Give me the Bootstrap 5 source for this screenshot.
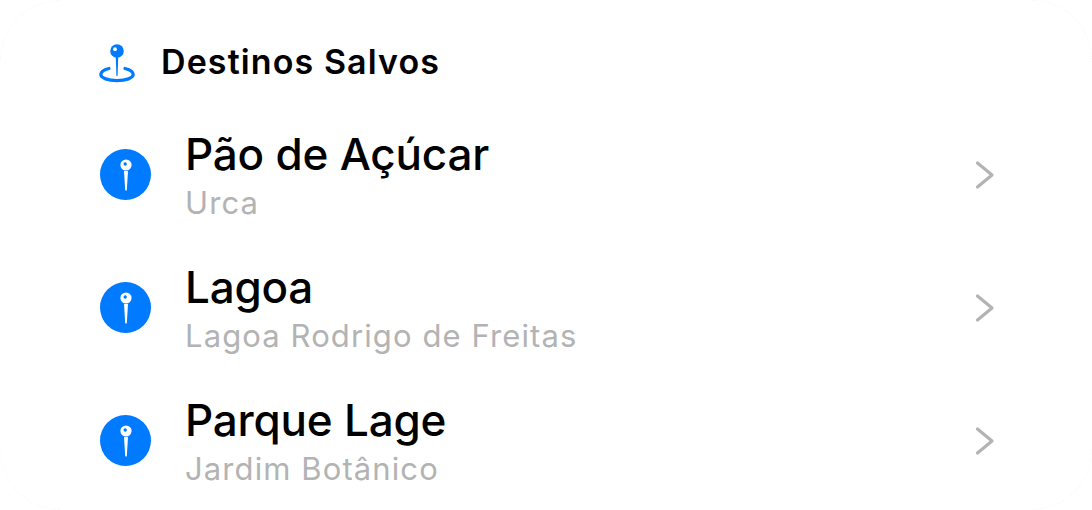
<!DOCTYPE html>
<html lang="en">
<head>
  <meta charset="UTF-8">
  <title>Destinos Salvos</title>
  <link href="https://cdn.jsdelivr.net/npm/bootstrap@5.3.0/dist/css/bootstrap.min.css" rel="stylesheet">
  <style>
    body { background: #fff; font-family: Inter, "Liberation Sans", sans-serif; overflow: hidden; }
    .saved-card { width: 1092px; height: 510px; padding: 41px 97px 0 98px; }
    /* hairline only shows on the rounded corners */
    .saved-card::before {
      content: ""; position: absolute; inset: 0;
      border: 1px dotted #f5f5f5; border-radius: 60px;
      -webkit-mask-image:
        linear-gradient(to right, #000 60px, transparent 60px, transparent calc(100% - 60px), #000 calc(100% - 60px)),
        linear-gradient(to bottom, #000 60px, transparent 60px, transparent calc(100% - 60px), #000 calc(100% - 60px));
      -webkit-mask-composite: source-in;
      mask-composite: intersect;
      pointer-events: none;
    }
    .saved-head { height: 42px; gap: 25px; font-size: 34px; font-weight: 600; line-height: 42px; letter-spacing: 1.1px; color: #000; }
    .saved-list { margin-top: 25px; }
    .saved-row { height: 133px; padding-left: 2px; }
    .place-dot { width: 51px; height: 51px; background: #007aff; flex: none; }
    .place-text { margin-left: 34px; padding-top: 1px; }
    .place-name { font-size: 44px; font-weight: 500; line-height: 56px; letter-spacing: -.2px; color: #000; }
    .place-sub { font-size: 31px; line-height: 42px; color: #b3b3b3; letter-spacing: 1.1px; }
  </style>
</head>
<body>

<div class="saved-card position-relative">
  <div class="saved-head d-flex align-items-center">
    <svg width="38" height="42" viewBox="0 0 38 42" fill="none">
      <path d="M11 27.5C6 28.7 2.8 31 2.8 33.6C2.8 37 10 39.6 19 39.6C28 39.6 35.2 37 35.2 33.6C35.2 31 32 28.7 27 27.5" stroke="#007aff" stroke-width="3.2" stroke-linecap="round"/>
      <path d="M17.7 14H20.3L19.6 34.6Q19 36 18.4 34.6Z" fill="#007aff"/>
      <circle cx="19" cy="10" r="6.8" fill="#007aff"/>
      <circle cx="17" cy="8.2" r="1.9" fill="#fff"/>
    </svg>
    <span>Destinos Salvos</span>
  </div>

  <div id="places" class="saved-list"></div>
</div>

<script>
  const places = [
    { name: 'Pão de Açúcar', area: 'Urca' },
    { name: 'Lagoa', area: 'Lagoa Rodrigo de Freitas' },
    { name: 'Parque Lage', area: 'Jardim Botânico' }
  ];

  // One row per saved place: pin badge, two lines of text, chevron
  document.getElementById('places').innerHTML = places.map(p => `
    <div class="saved-row d-flex align-items-center">
      <div class="place-dot rounded-circle d-flex align-items-center justify-content-center">
        <svg width="16" height="32" viewBox="0 0 16 32">
          <path d="M6 12H10L8.8 31Q8 32.4 7.2 31Z" fill="#fff"/>
          <circle cx="8" cy="6" r="5.6" fill="#fff"/>
          <circle cx="7.2" cy="5" r="1.7" fill="#007aff"/>
        </svg>
      </div>
      <div class="place-text flex-grow-1">
        <div class="place-name">${p.name}</div>
        <div class="place-sub">${p.area}</div>
      </div>
      <svg width="20" height="30" viewBox="0 0 20 30" fill="none">
        <path d="M2.5 3L17 15L2.5 27" stroke="#b3b3b3" stroke-width="3.2" stroke-linecap="round" stroke-linejoin="round"/>
      </svg>
    </div>`).join('');
</script>
<script src="https://cdn.jsdelivr.net/npm/bootstrap@5.3.0/dist/js/bootstrap.bundle.min.js"></script>
</body>
</html>
